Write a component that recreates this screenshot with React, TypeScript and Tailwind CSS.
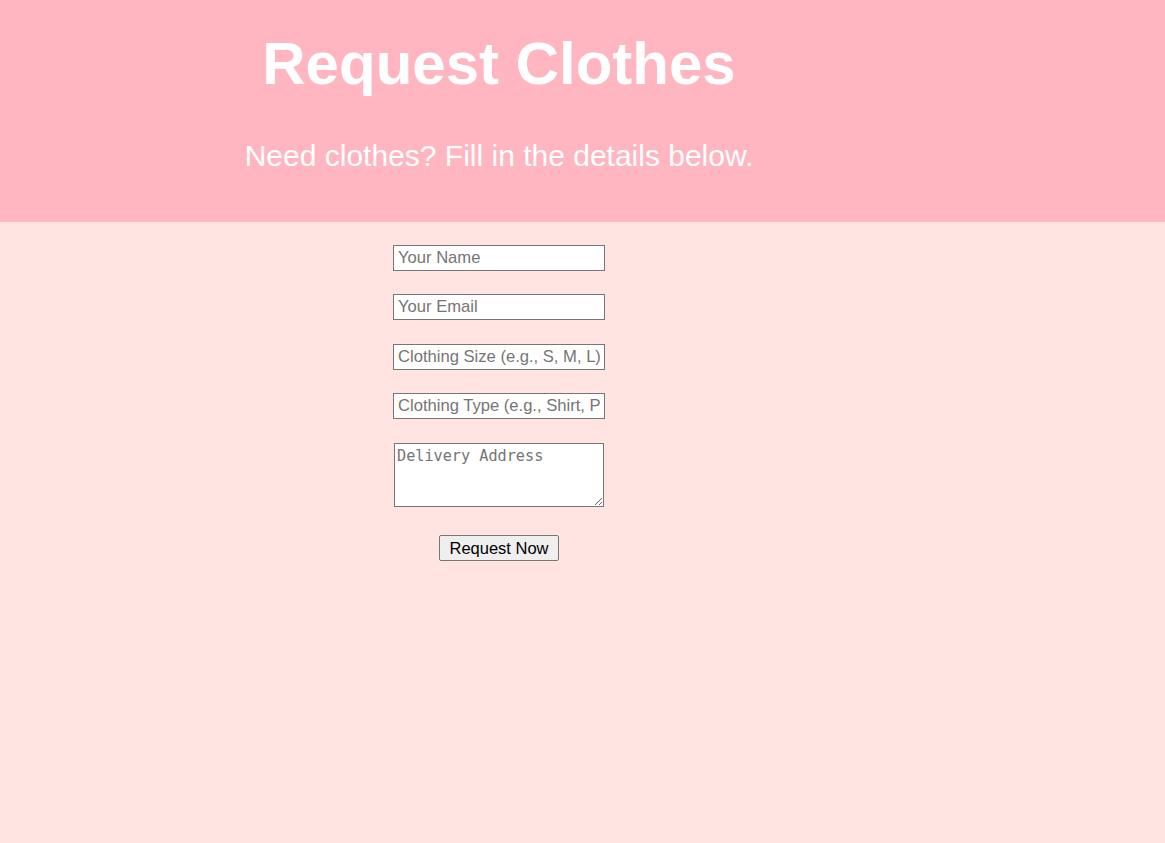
export default function App() {
  const inputClass =
    'block w-[212px] h-[26px] border border-[#767676] bg-white px-[4px] text-[16.6px] text-black placeholder:text-[#757575] outline-none';

  return (
    <div className="min-h-[843px] bg-[#ffe4e1] font-['Liberation_Sans',Arial,sans-serif]">
      <header className="bg-[#ffb6c1] pt-[34px] pb-[48px]">
        <div className="w-[998px] text-center text-white">
          <h1 className="text-[60px] font-bold leading-[60px]">Request Clothes</h1>
          <p className="mt-[44px] text-[30px] leading-[36px]">
            Need clothes? Fill in the details below.
          </p>
        </div>
      </header>

      <form
        className="flex w-[998px] flex-col items-center pt-[23px]"
        onSubmit={(e) => e.preventDefault()}
      >
        <input type="text" placeholder="Your Name" className={inputClass} />
        <input type="email" placeholder="Your Email" className={`${inputClass} mt-[23px]`} />
        <input
          type="text"
          placeholder="Clothing Size (e.g., S, M, L)"
          className={`${inputClass} mt-[24px]`}
        />
        <input
          type="text"
          placeholder="Clothing Type (e.g., Shirt, Pants)"
          className={`${inputClass} mt-[23px]`}
        />
        <textarea
          placeholder="Delivery Address"
          className="mt-[24px] block h-[64px] w-[210px] border border-[#767676] bg-white px-[2px] pt-[3px] pb-[2px] font-['DejaVu_Sans_Mono',monospace] text-[15.2px] leading-[18px] text-black placeholder:text-[#757575] outline-none"
        />
        <button
          type="submit"
          className="mt-[28px] h-[26px] w-[120px] rounded-[2px] border border-[#767676] bg-[#efefef] text-[16.5px] leading-[20px] text-black"
        >
          Request Now
        </button>
      </form>
    </div>
  );
}
